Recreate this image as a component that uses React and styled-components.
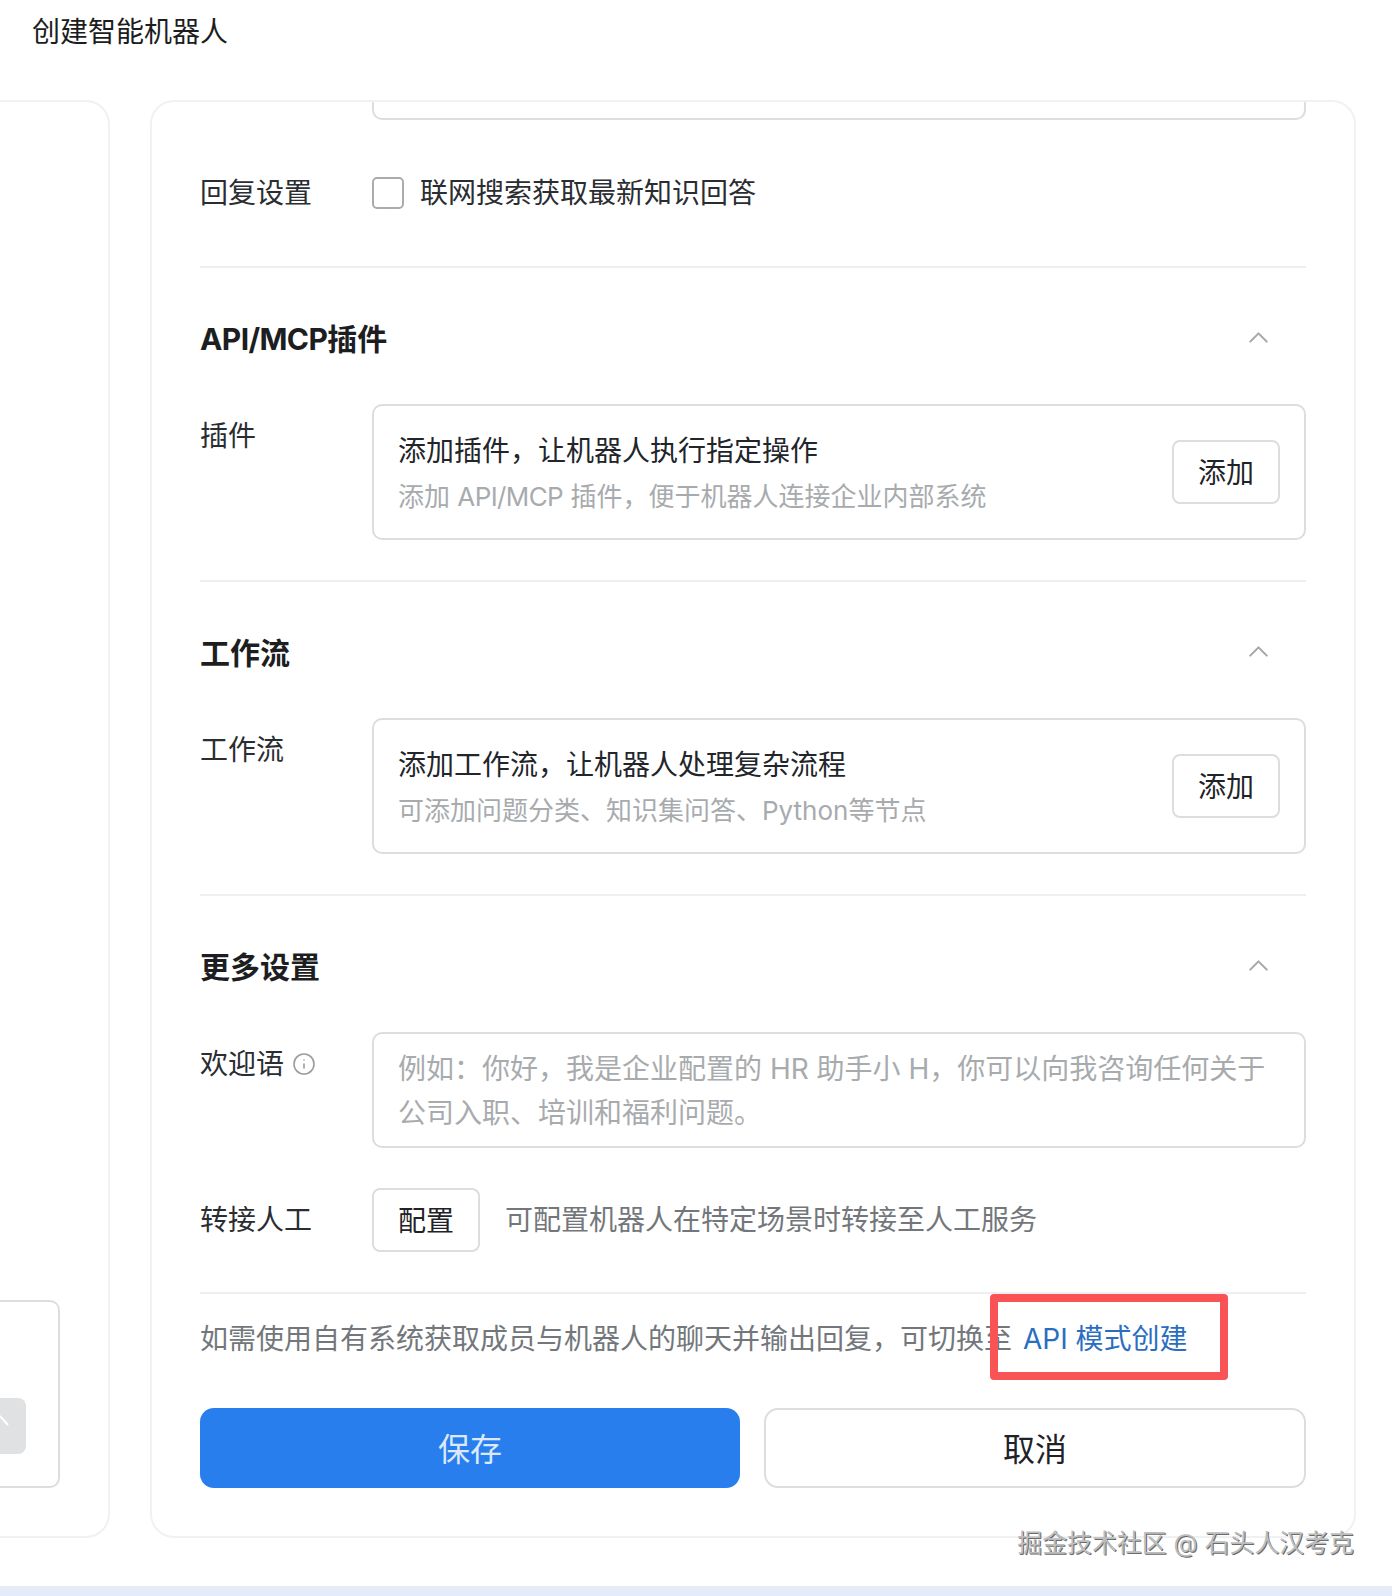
import React from "react";
import styled, { createGlobalStyle } from "styled-components";
import { ChevronUp, Info } from "lucide-react";

const GlobalStyle = createGlobalStyle`
  html, body {
    margin: 0;
    padding: 0;
    background: #fff;
  }
  body {
    font-family: "Inter", "Noto Sans CJK SC", sans-serif;
    color: #1f2329;
  }
  * {
    box-sizing: border-box;
  }
`;

const Page = styled.div`
  position: relative;
  width: 1392px;
  height: 1596px;
  overflow: hidden;
  display: flex;
  flex-direction: column;
`;

const Header = styled.h1`
  margin: 0;
  height: 100px;
  padding: 11px 0 0 32px;
  font-size: 28px;
  line-height: 42px;
  font-weight: 400;
  color: #1b1d20;
`;

const Columns = styled.div`
  display: flex;
  gap: 40px;
  height: 1438px;
`;

const SidePanel = styled.aside`
  width: 110px;
  display: flex;
  flex-direction: column;
  justify-content: flex-end;
  padding: 0 48px 48px 0;
  border: 2px solid #f0f1f2;
  border-left: 0;
  border-radius: 0 24px 24px 0;
`;

const SideBox = styled.div`
  height: 188px;
  display: flex;
  align-items: flex-end;
  justify-content: flex-end;
  padding: 0 32px 32px 0;
  border: 2px solid #dcdddf;
  border-left: 0;
  border-radius: 0 10px 10px 0;
`;

const SideButton = styled.div`
  width: 26px;
  height: 56px;
  background: #dfe1e3;
  border-radius: 0 8px 8px 0;
  svg {
    display: block;
  }
`;

const MainCard = styled.main`
  width: 1206px;
  padding: 0 48px;
  border: 2px solid #f0f1f2;
  border-radius: 24px;
`;

const ClippedInput = styled.div`
  height: 18px;
  margin-left: 172px;
  border: 2px solid #dcdddf;
  border-top: 0;
  border-radius: 0 0 10px 10px;
`;

const Row = styled.div`
  display: flex;
  align-items: ${(p) => p.$align || "flex-start"};
  margin-top: ${(p) => p.$top || 0}px;
`;

const Label = styled.div`
  width: 172px;
  flex: none;
  display: flex;
  align-items: center;
  gap: 8px;
  padding-top: ${(p) => p.$inset || 0}px;
  font-size: 28px;
  line-height: 42px;
  color: #2a2d31;
  svg {
    color: #9a9da0;
  }
`;

const Checkbox = styled.span`
  width: 32px;
  height: 32px;
  flex: none;
  border: 2px solid #a9abae;
  border-radius: 5px;
  margin-right: 16px;
`;

const BodyText = styled.span`
  font-size: 28px;
  line-height: 42px;
  color: #2a2d31;
`;

const Divider = styled.div`
  height: 2px;
  background: #eeeff0;
  margin-top: ${(p) => p.$top}px;
`;

const SectionHead = styled.div`
  display: flex;
  align-items: center;
  justify-content: space-between;
  height: 44px;
  margin-top: 47px;
  padding-right: 31px;
  font-size: 30px;
  font-weight: 700;
  color: #1c1e21;
  svg {
    color: #a5a7aa;
  }
`;

const Latin = styled.span`
  letter-spacing: -0.6px;
`;

const AddBox = styled.div`
  flex: 1;
  height: 136px;
  display: flex;
  align-items: center;
  justify-content: space-between;
  padding: 0 24px;
  border: 2px solid #dcdddf;
  border-radius: 10px;
`;

const AddText = styled.div`
  padding-top: 4px;
`;

const AddTitle = styled.div`
  font-size: 28px;
  line-height: 42px;
  color: #22252a;
`;

const AddHint = styled.div`
  margin-top: 4px;
  font-size: 26px;
  line-height: 42px;
  color: #a8abae;
`;

const OutlineButton = styled.button`
  width: 108px;
  height: 64px;
  flex: none;
  padding: 0 0 2px;
  background: #fff;
  border: 2px solid #dcdddf;
  border-radius: 8px;
  font: inherit;
  font-size: 28px;
  color: #1f2329;
`;

const TextArea = styled.div`
  flex: 1;
  height: 116px;
  padding: 13px 24px 0;
  border: 2px solid #dcdddf;
  border-radius: 10px;
  font-size: 28px;
  line-height: 44px;
  color: #a8abae;
`;

const Hint = styled.span`
  margin-left: 25px;
  font-size: 28px;
  line-height: 42px;
  color: #73777b;
`;

const Note = styled.div`
  margin-top: 24px;
  font-size: 28px;
  line-height: 42px;
  color: #73777b;
  a {
    margin-left: 11px;
    color: #2a6ec1;
    text-decoration: none;
  }
`;

const Actions = styled.div`
  display: grid;
  grid-template-columns: 540px 542px;
  gap: 24px;
  margin-top: 48px;
`;

const ActionButton = styled.button`
  height: 80px;
  padding: 0 0 2px;
  border-radius: 14px;
  font: inherit;
  font-size: 32px;
  background: ${(p) => (p.$primary ? "#297eee" : "#fff")};
  color: ${(p) => (p.$primary ? "#dce9fb" : "#1f2329")};
  border: ${(p) => (p.$primary ? "0" : "2px solid #dcdddf")};
`;

const Highlight = styled.div`
  position: absolute;
  left: 990px;
  top: 1294px;
  width: 238px;
  height: 86px;
  border: 8px solid #f95355;
  border-radius: 4px;
`;

const Watermark = styled.div`
  position: absolute;
  right: 38px;
  top: 1526px;
  font-size: 24.9px;
  line-height: 34px;
  color: #bdbdbd;
  text-shadow: 1px 1px 0 #6a6a6a;
`;

const BottomStrip = styled.div`
  position: absolute;
  left: 0;
  right: 0;
  bottom: 0;
  height: 10px;
  background: #e5ebf8;
`;

const Section = ({ title, children }) => (
  <>
    <SectionHead>
      <span>{title}</span>
      <ChevronUp size={33} strokeWidth={1.5} />
    </SectionHead>
    {children}
  </>
);

const AddRow = ({ label, title, hint }) => (
  <Row $top={45}>
    <Label $inset={11}>{label}</Label>
    <AddBox>
      <AddText>
        <AddTitle>{title}</AddTitle>
        <AddHint>{hint}</AddHint>
      </AddText>
      <OutlineButton>添加</OutlineButton>
    </AddBox>
  </Row>
);

export default function App() {
  return (
    <Page>
      <GlobalStyle />
      <Header>创建智能机器人</Header>
      <Columns>
        <SidePanel>
          <SideBox>
            <SideButton>
              <svg width="26" height="56" viewBox="0 0 26 56">
                <path d="M0 18 L8 27" stroke="#fff" strokeWidth="2" fill="none" />
              </svg>
            </SideButton>
          </SideBox>
        </SidePanel>
        <MainCard>
          <ClippedInput />
          <Row $top={52} $align="center">
            <Label>回复设置</Label>
            <Checkbox />
            <BodyText>联网搜索获取最新知识回答</BodyText>
          </Row>
          <Divider $top={52} />
          <Section title={<><Latin>API/MCP</Latin>插件</>}>
            <AddRow
              label="插件"
              title="添加插件，让机器人执行指定操作"
              hint={<>添加 <Latin>API/MCP</Latin> 插件，便于机器人连接企业内部系统</>}
            />
          </Section>
          <Divider $top={40} />
          <Section title="工作流">
            <AddRow
              label="工作流"
              title="添加工作流，让机器人处理复杂流程"
              hint="可添加问题分类、知识集问答、Python等节点"
            />
          </Section>
          <Divider $top={40} />
          <Section title="更多设置">
            <Row $top={45}>
              <Label $inset={11}>
                欢迎语
                <Info size={24} strokeWidth={1.6} />
              </Label>
              <TextArea>
                例如：你好，我是企业配置的 HR 助手小 H，你可以向我咨询任何关于公司入职、培训和福利问题。
              </TextArea>
            </Row>
          </Section>
          <Row $top={40} $align="center">
            <Label>转接人工</Label>
            <OutlineButton>配置</OutlineButton>
            <Hint>可配置机器人在特定场景时转接至人工服务</Hint>
          </Row>
          <Divider $top={40} />
          <Note>
            如需使用自有系统获取成员与机器人的聊天并输出回复，可切换至
            <a href="#api">API 模式创建</a>
          </Note>
          <Actions>
            <ActionButton $primary>保存</ActionButton>
            <ActionButton>取消</ActionButton>
          </Actions>
        </MainCard>
      </Columns>
      <Highlight />
      <Watermark>掘金技术社区 @ 石头人汉考克</Watermark>
      <BottomStrip />
    </Page>
  );
}
